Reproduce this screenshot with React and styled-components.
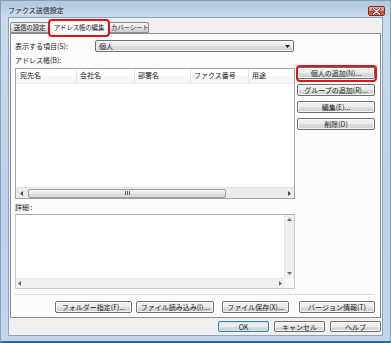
import React from 'react';
import styled, { createGlobalStyle } from 'styled-components';

const Global = createGlobalStyle`
  html, body { margin: 0; padding: 0; }
  body {
    width: 391px; height: 343px; overflow: hidden;
    background: #2f6b86;
    font-family: "Noto Sans CJK JP", "Noto Sans", sans-serif;
    -webkit-font-smoothing: antialiased;
  }
`;

const FONT = `"Noto Sans CJK JP", "Noto Sans", sans-serif`;

const Window = styled.div`
  width: 391px;
  height: 343px;
  box-sizing: border-box;
  display: flex;
  flex-direction: column;
  background: linear-gradient(180deg, #b2c7dd 0px, #c9daec 16px, #bcd2ea 60%, #c2d7ee 100%);
  border: 1px solid #8a9db3;
  border-bottom: 2px solid #2f6b86;
`;

const TitleBar = styled.div`
  height: 16px;
  flex: none;
  display: flex;
  align-items: center;
  justify-content: space-between;
  padding-left: 7px;
`;

const Title = styled.span`
  font: 7px/9px ${FONT};
  color: #1b1b1b;
  margin-top: 2px;
`;

const CloseButton = styled.div`
  align-self: flex-start;
  margin-top: 5px;
  margin-right: 5px;
  width: 17px;
  height: 10px;
  box-sizing: border-box;
  border: 1px solid #7e2b20;
  border-radius: 2px;
  background: linear-gradient(180deg, #eab1a5 0%, #dc8775 45%, #c7452f 52%, #d3705c 100%);
  display: flex;
  align-items: center;
  justify-content: center;
`;

const Client = styled.div`
  flex: 1;
  margin: 0 7px 5px 7px;
  border: 1px solid #8ca3bf;
  background: #f0f0f0;
  display: flex;
  flex-direction: column;
  padding: 2px 1px 3px 1px;
  min-height: 0;
`;

const TabStrip = styled.div`
  height: 14px;
  flex: none;
  display: flex;
  align-items: flex-end;
  margin-bottom: -1px;
  position: relative;
  z-index: 2;
`;

const Tab = styled.div`
  position: relative;
  box-sizing: border-box;
  width: ${p => p.$w}px;
  height: ${p => (p.$active ? 14 : 11)}px;
  margin-bottom: ${p => (p.$active ? 0 : 1)}px;
  border: 1px solid #898c95;
  border-bottom: ${p => (p.$active ? 'none' : '1px solid #898c95')};
  border-radius: 2px 2px 0 0;
  background: ${p => (p.$active ? '#fcfcfc' : 'linear-gradient(180deg, #f2f2f2 0%, #ebebeb 50%, #dddddd 51%, #cfcfcf 100%)')};
  font: 6.5px/9px ${FONT};
  letter-spacing: -0.2px;
  color: #1b1b1b;
  white-space: nowrap;
  overflow: ${p => (p.$active ? 'visible' : 'hidden')};
  display: flex;
  align-items: ${p => (p.$active ? 'flex-start' : 'center')};
  justify-content: ${p => p.$justify || 'center'};
  padding-left: ${p => p.$pl || 0}px;
  padding-top: ${p => (p.$active ? 2 : 0)}px;
  z-index: ${p => (p.$active ? 3 : 1)};
`;

const Highlight = styled.div`
  position: absolute;
  top: ${p => p.$t}px;
  left: ${p => p.$l}px;
  right: ${p => p.$r}px;
  bottom: ${p => p.$b}px;
  border: 2px solid #e3121b;
  border-radius: 4px;
  pointer-events: none;
  z-index: 10;
`;

const Panel = styled.div`
  flex: 1;
  min-height: 0;
  border: 1px solid #898c95;
  background: #fcfcfc;
  padding: 6px 5px 0 4px;
  display: flex;
  flex-direction: column;
  position: relative;
  z-index: 1;
`;

const Row = styled.div`
  display: flex;
  align-items: ${p => p.$align || 'center'};
  margin-top: ${p => p.$mt || 0}px;
`;

const Label = styled.div`
  font: 7px/9px ${FONT};
  color: #1b1b1b;
  width: ${p => (p.$w ? `${p.$w}px` : 'auto')};
  margin-top: ${p => p.$mt || 0}px;
  white-space: nowrap;
`;

const Select = styled.div`
  width: 199px;
  height: 12px;
  box-sizing: border-box;
  border: 1px solid #707070;
  border-radius: 2px;
  background: linear-gradient(180deg, #f2f2f2 0%, #ebebeb 50%, #dddddd 51%, #cfcfcf 100%);
  box-shadow: inset 0 0 0 1px rgba(255, 255, 255, 0.7);
  display: flex;
  align-items: center;
  justify-content: space-between;
  padding: 0 3px 0 3px;
  font: 7px/9px ${FONT};
  color: #1b1b1b;
`;

const ListBox = styled.div`
  width: 280px;
  height: 131px;
  box-sizing: border-box;
  border: 1px solid #a0a4ab;
  background: #fff;
  display: flex;
  flex-direction: column;
  flex: none;
`;

const ListHeader = styled.div`
  height: 14px;
  flex: none;
  display: flex;
  background: linear-gradient(180deg, #ffffff 0%, #ffffff 45%, #f6f7f8 55%, #f3f4f6 100%);
  border-bottom: 1px solid #eceef1;
`;

const HeaderCell = styled.div`
  box-sizing: border-box;
  width: ${p => (p.$w ? `${p.$w}px` : 'auto')};
  flex: ${p => (p.$w ? 'none' : 1)};
  padding-left: ${p => p.$pl || 3}px;
  border-right: ${p => (p.$last ? 'none' : '1px solid #e3e6ea')};
  font: 7px/13px ${FONT};
  color: #1b1b1b;
  white-space: nowrap;
  overflow: hidden;
`;

const ListBody = styled.div`
  flex: 1;
`;

const HScroll = styled.div`
  height: 11px;
  flex: none;
  display: flex;
  align-items: center;
  background: #ebebeb;
  border-top: 1px solid #e4e4e4;
  box-sizing: border-box;
`;

const ArrowCell = styled.div`
  width: ${p => p.$w || 10}px;
  height: ${p => p.$h || 10}px;
  flex: none;
  display: flex;
  align-items: center;
  justify-content: center;
`;

const Thumb = styled.div`
  width: ${p => p.$w}px;
  height: 9px;
  margin-left: 2px;
  box-sizing: border-box;
  border: 1px solid #9b9b9b;
  border-radius: 2px;
  background: linear-gradient(180deg, #f6f6f6 0%, #e8e8e8 50%, #d8d8d8 51%, #dedede 100%);
  display: flex;
  align-items: center;
  justify-content: center;
  gap: 1px;
`;

const GripLine = styled.span`
  width: 1px;
  height: 4px;
  background: #5f5f5f;
`;

const Spacer = styled.div`
  flex: 1;
`;

const ButtonColumn = styled.div`
  display: flex;
  flex-direction: column;
  gap: 5px;
  margin-left: 2px;
  margin-top: -1px;
`;

const Btn = styled.div`
  position: relative;
  box-sizing: border-box;
  width: ${p => p.$w}px;
  height: ${p => p.$h || 12}px;
  margin-left: ${p => p.$ml || 0}px;
  border: 1px solid ${p => (p.$default ? '#3c7fb1' : '#707070')};
  border-radius: 2px;
  background: linear-gradient(180deg, #f2f2f2 0%, #ebebeb 50%, #dddddd 51%, #cfcfcf 100%);
  box-shadow: inset 0 0 0 1px ${p => (p.$default ? 'rgba(190, 230, 253, 0.9)' : 'rgba(255, 255, 255, 0.75)')};
  font: 7px/10px ${FONT};
  color: #1b1b1b;
  white-space: nowrap;
  display: flex;
  align-items: center;
  justify-content: center;
  flex: none;
`;

const DetailBox = styled.div`
  width: 280px;
  height: 75px;
  box-sizing: border-box;
  margin-top: 2px;
  border: 1px solid #c8ccd2;
  border-top-color: #abadb3;
  background: #fff;
  display: grid;
  grid-template-columns: 1fr 10px;
  grid-template-rows: 1fr 10px;
`;

const VScroll = styled.div`
  background: #f0f0f0;
  border-left: 1px solid #e8e8e8;
  display: flex;
  flex-direction: column;
  justify-content: space-between;
  align-items: center;
  padding: 3px 0 3px;
`;

const HScrollFlat = styled.div`
  background: #f0f0f0;
  border-top: 1px solid #e8e8e8;
  display: flex;
  align-items: center;
  justify-content: space-between;
  padding: 0 2px 0 2px;
`;

const Corner = styled.div`
  background: #f7f7f7;
`;

const Separator = styled.div`
  margin-top: 5px;
  margin-right: 1px;
  height: 1px;
  background: #d9d9d9;
  border-bottom: 1px solid #ffffff;
`;

const BottomRow = styled.div`
  display: flex;
  justify-content: flex-end;
  margin-top: 5px;
`;

const Footer = styled.div`
  height: 11px;
  flex: none;
  margin-top: 3px;
  display: flex;
  justify-content: flex-end;
`;

const Tri = ({ dir = 'left', color = '#4a4a4a' }) => {
  const pts = {
    left: '3,0 0,2.5 3,5',
    right: '0,0 3,2.5 0,5',
    up: '0,3 2.5,0 5,3',
    down: '0,0 5,0 2.5,3',
  }[dir];
  const horiz = dir === 'left' || dir === 'right';
  return (
    <svg width={horiz ? 3 : 5} height={horiz ? 5 : 3} viewBox={horiz ? '0 0 3 5' : '0 0 5 3'}>
      <polygon points={pts} fill={color} />
    </svg>
  );
};

const CloseX = () => (
  <svg width="9" height="7" viewBox="0 0 9 7">
    <path d="M1.5 0.8 L7.5 6.2 M7.5 0.8 L1.5 6.2" stroke="#5a1a12" strokeWidth="2.6" strokeLinecap="round" />
    <path d="M1.5 0.8 L7.5 6.2 M7.5 0.8 L1.5 6.2" stroke="#ffffff" strokeWidth="1.4" strokeLinecap="round" />
  </svg>
);

export default function App() {
  return (
    <>
      <Global />
      <Window>
        <TitleBar>
          <Title>ファクス送信設定</Title>
          <CloseButton>
            <CloseX />
          </CloseButton>
        </TitleBar>
        <Client>
          <TabStrip>
            <Tab $w={39}>送信の設定</Tab>
            <Tab $w={60} $active>
              アドレス帳の編集
              <Highlight $t={-2} $l={-2} $r={-2} $b={-3} />
            </Tab>
            <Tab $w={40} $justify="flex-start" $pl={1}>カバーシート</Tab>
          </TabStrip>
          <Panel>
            <Row>
              <Label $w={80}>表示する項目(S):</Label>
              <Select>
                <span>個人</span>
                <Tri dir="down" color="#1a1a1a" />
              </Select>
            </Row>
            <Label $mt={4}>アドレス帳(B):</Label>
            <Row $align="flex-start" $mt={3}>
              <ListBox>
                <ListHeader>
                  <HeaderCell $w={61} $pl={4}>宛先名</HeaderCell>
                  <HeaderCell $w={58}>会社名</HeaderCell>
                  <HeaderCell $w={56}>部署名</HeaderCell>
                  <HeaderCell $w={58}>ファクス番号</HeaderCell>
                  <HeaderCell $last>用途</HeaderCell>
                </ListHeader>
                <ListBody />
                <HScroll>
                  <ArrowCell>
                    <Tri dir="left" />
                  </ArrowCell>
                  <Thumb $w={198}>
                    <GripLine />
                    <GripLine />
                    <GripLine />
                  </Thumb>
                  <Spacer />
                  <ArrowCell>
                    <Tri dir="right" />
                  </ArrowCell>
                </HScroll>
              </ListBox>
              <ButtonColumn>
                <Btn $w={78}>
                  個人の追加(N)...
                  <Highlight $t={-3} $l={-2} $r={-3} $b={-4} />
                </Btn>
                <Btn $w={78}>グループの追加(R)...</Btn>
                <Btn $w={78}>編集(E)...</Btn>
                <Btn $w={78}>削除(D)</Btn>
              </ButtonColumn>
            </Row>
            <Label $mt={4}>詳細 :</Label>
            <DetailBox>
              <div />
              <VScroll>
                <Tri dir="up" color="#6a6a6a" />
                <Tri dir="down" color="#6a6a6a" />
              </VScroll>
              <HScrollFlat>
                <Tri dir="left" color="#6a6a6a" />
                <Tri dir="right" color="#6a6a6a" />
              </HScrollFlat>
              <Corner />
            </DetailBox>
            <Separator />
            <BottomRow>
              <Btn $w={77}>フォルダー指定(F)...</Btn>
              <Btn $w={78} $ml={4}>ファイル読み込み(I)...</Btn>
              <Btn $w={67} $ml={8}>ファイル保存(X)...</Btn>
              <Btn $w={76} $ml={10}>バージョン情報(T)</Btn>
            </BottomRow>
          </Panel>
          <Footer>
            <Btn $w={51} $h={11} $default>OK</Btn>
            <Btn $w={51} $h={11} $ml={5}>キャンセル</Btn>
            <Btn $w={51} $h={11} $ml={5}>ヘルプ</Btn>
          </Footer>
        </Client>
      </Window>
    </>
  );
}
